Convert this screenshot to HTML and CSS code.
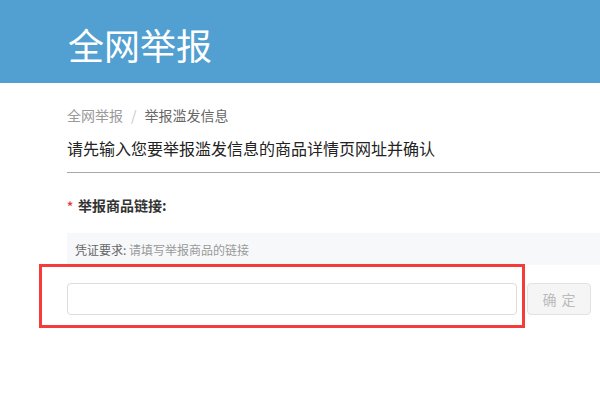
FILE: index.html
```html
<!DOCTYPE html>
<html lang="zh-CN">
<head>
<meta charset="utf-8">
<title>全网举报</title>
<link rel="stylesheet" href="styles.css">
</head>
<body>
<header class="top"><h1 class="title">全网举报</h1></header>
<main class="main">
  <nav class="crumbs"><span class="crumb">全网举报</span><span class="sep">/</span><span class="crumb current">举报滥发信息</span></nav>
  <p class="lead">请先输入您要举报滥发信息的商品详情页网址并确认</p>
  <div class="field">
    <div class="label"><span class="req">*</span>举报商品链接:</div>
    <div class="hint"><span class="hint-key">凭证要求:</span> 请填写举报商品的链接</div>
    <div class="entry">
      <input class="url" type="text">
      <button class="ok" type="button">确 定</button>
      <div class="mark"></div>
    </div>
  </div>
</main>
</body>
</html>
```

FILE: styles.css
```css
html, body {
  margin: 0;
  padding: 0;
}
body {
  width: 600px;
  height: 400px;
  overflow: hidden;
  background: #fff;
  font-family: "Noto Sans CJK SC", "Noto Sans", sans-serif;
  color: #333;
}
.top {
  height: 83px;
  background: #529fd1;
  padding-left: 68px;
  display: flex;
  align-items: center;
  box-sizing: border-box;
}
.title {
  margin: 0;
  padding-top: 4px;
  font-size: 36px;
  font-weight: normal;
  line-height: 1;
  color: #fff;
}
.main {
  padding-left: 67px;
}
.crumbs {
  margin-top: 22px;
  font-size: 14px;
  line-height: 20px;
  color: #999;
}
.sep {
  margin: 0 8px;
  color: #c8c8c8;
}
.current {
  color: #666;
}
.lead {
  margin: 11px 0 0;
  padding-bottom: 12px;
  font-size: 16px;
  line-height: 24px;
  color: #222;
  border-bottom: 1px solid #a8a8a8;
}
.label {
  margin-top: 22px;
  font-size: 14px;
  line-height: 20px;
  font-weight: bold;
  color: #333;
}
.req {
  color: #e4393c;
  font-size: 12px;
  margin-right: 5px;
}
.hint {
  margin-top: 17px;
  height: 32px;
  line-height: 34px;
  padding-left: 8px;
  background: #f7f8fa;
  font-size: 12px;
  color: #999;
}
.hint-key {
  color: #666;
}
.entry {
  position: relative;
  margin-top: 18px;
  display: flex;
  gap: 10px;
}
.url {
  width: 450px;
  height: 32px;
  box-sizing: border-box;
  border: 1px solid #dcdcdc;
  border-radius: 4px;
  margin: 0;
  padding: 0 8px;
  background: #fff;
}
.ok {
  width: 64px;
  height: 32px;
  box-sizing: border-box;
  margin: 0;
  padding: 0 0 0 1px;
  border: 1px solid #e2e2e2;
  border-radius: 4px;
  background: #f5f5f5;
  color: #bbb;
  font-family: "Noto Sans CJK SC", sans-serif;
  font-size: 14px;
  letter-spacing: 1px;
}
.mark {
  position: absolute;
  left: -28px;
  top: -19px;
  width: 486px;
  height: 64px;
  box-sizing: border-box;
  border: 3px solid #f43c3c;
}
```
